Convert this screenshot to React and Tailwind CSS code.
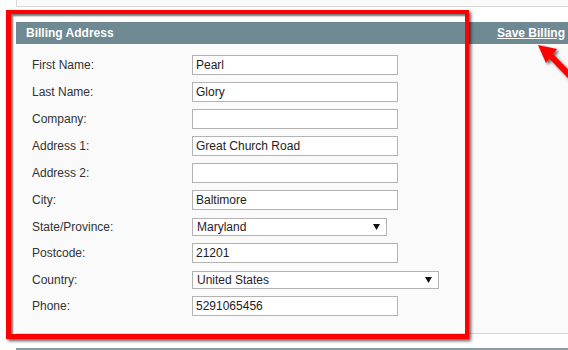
import React from 'react';

const rows = [
  { label: 'First Name:', value: 'Pearl' },
  { label: 'Last Name:', value: 'Glory' },
  { label: 'Company:', value: '' },
  { label: 'Address 1:', value: 'Great Church Road' },
  { label: 'Address 2:', value: '' },
  { label: 'City:', value: 'Baltimore' },
  { label: 'State/Province:', value: 'Maryland', select: 'w-[195px]' },
  { label: 'Postcode:', value: '21201' },
  { label: 'Country:', value: 'United States', select: 'w-[247px]' },
  { label: 'Phone:', value: '5291065456' },
];

const Field = ({ row }) => {
  if (row.select) {
    return (
      <div className={`${row.select} mt-[4px] h-[18px] flex items-center justify-between border border-[#b3b3b3] bg-white pl-[4px] pr-[6px] text-[12px] text-[#2a1a2a]`}>
        <span>{row.value}</span>
        <svg width="7" height="6" viewBox="0 0 7 6">
          <path d="M0 0 H7 L3.5 6 Z" fill="#111" />
        </svg>
      </div>
    );
  }
  return (
    <div className="w-[206px] mt-[3px] h-[20px] flex items-center border border-[#b3b3b3] bg-white pl-[3px] text-[12px] text-[#222]">
      {row.value}
    </div>
  );
};

export default function App() {
  return (
    <div className="relative w-[568px] h-[350px] overflow-hidden bg-white font-['Liberation_Sans',Arial,sans-serif]">
      {/* previous box end */}
      <div className="ml-[16px] h-[7px] border-l border-b border-[#d9d9d9] bg-[#fafafa]" />

      <div className="ml-[16px] mt-[15px]">
        <div className="h-[22px] bg-[#6f8992] flex items-center justify-between pl-[10px] pr-[3px] text-[12px] font-bold text-white">
          <span>Billing Address</span>
          <span className="underline">Save Billing</span>
        </div>
        <div className="bg-[#fafafa] border-b border-[#d6d6d6] pt-[8px] pb-[13px] pl-[16px]">
          {rows.map((row) => (
            <div key={row.label} className={`${row.select ? 'h-[26px]' : 'h-[27px]'} flex items-start`}>
              <div className="w-[160px] mt-[3px] h-[20px] flex items-center text-[12px] text-[#333]">{row.label}</div>
              <Field row={row} />
            </div>
          ))}
        </div>
      </div>

      <div className="ml-[16px] mt-[14px] h-[2px] bg-[#8a9ca3]" />

      {/* annotation frame */}
      <div className="absolute left-[6px] top-[10px] w-[463px] h-[329px] border-[5px] border-t-4 border-r-4 border-[#ff0000] shadow-[2px_2px_3px_rgba(0,0,0,0.65),inset_2px_2px_2px_rgba(0,0,0,0.55)]" />

      {/* annotation arrow */}
      <svg className="absolute left-[528px] top-[36px]" width="40" height="54" viewBox="528 36 40 54">
        <defs>
          <filter id="sh" x="-30%" y="-30%" width="160%" height="160%">
            <feDropShadow dx="2" dy="2" stdDeviation="1.5" floodColor="#000" floodOpacity="0.6" />
          </filter>
        </defs>
        <g filter="url(#sh)" fill="#ff0000">
          <path d="M538 45 L557 49 L546 63 Z" />
          <path d="M548 53 L576 82" stroke="#ff0000" strokeWidth="6" />
        </g>
      </svg>
    </div>
  );
}
